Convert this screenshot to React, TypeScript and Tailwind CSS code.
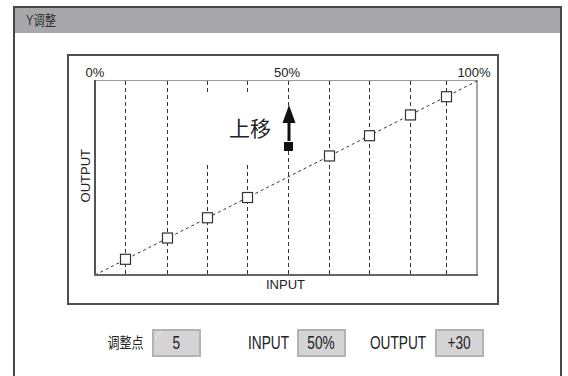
const W = 383;
const H = 195;
const cols = [31, 73, 113, 153, 194, 235, 275, 316, 352];
const yAt = (x: number) => H - (x / W) * (H - 1);

function Chart() {
  return (
    <svg width={385} height={197} className="block">
      {/* frame of the plot */}
      <line x1={0} y1={0.5} x2={384} y2={0.5} stroke="#9a9a9a" strokeWidth={1} />
      <line x1={383} y1={0} x2={383} y2={196} stroke="#8a8a8a" strokeWidth={1.5} />

      {cols.map((x) => (
        <line key={x} x1={x + 0.5} y1={1} x2={x + 0.5} y2={194} stroke="#333" strokeWidth={1} strokeDasharray="4 3" />
      ))}

      <line x1={1} y1={H} x2={W} y2={1} stroke="#333" strokeWidth={1} strokeDasharray="3 3" />

      {/* label area knocks out the guides */}
      <rect x={108} y={15} width={58} height={68} fill="#fff" />
      <text x={135} y={56} fontSize={21} fill="#222" fontFamily="'Noto Sans CJK SC', sans-serif">
        上移
      </text>

      <polygon points="195,25 188.5,43 201.5,43" fill="#111" />
      <rect x={193.5} y={42} width={3} height={19} fill="#111" />
      <rect x={190} y={62} width={9} height={9} fill="#111" />

      {cols
        .filter((x) => x !== 194)
        .map((x) => (
          <rect key={x} x={x - 4.5} y={yAt(x) - 5} width={10} height={10} fill="#fff" stroke="#333" strokeWidth={1.2} />
        ))}

      <line x1={1} y1={0} x2={1} y2={196} stroke="#555" strokeWidth={2} />
      <line x1={0} y1={H} x2={384} y2={H} stroke="#666" strokeWidth={2} />
    </svg>
  );
}

function Narrow({ w, children, size = 'text-[19px]' }: { w: string; children: React.ReactNode; size?: string }) {
  return (
    <div className={`${w} flex justify-center`}>
      <span className={`inline-block whitespace-nowrap scale-x-[0.72] ${size} leading-[22px] text-[#222]`}>{children}</span>
    </div>
  );
}

function ValueBox({ children, mark }: { children: React.ReactNode; mark?: boolean }) {
  return (
    <div className="relative w-[49px] h-[28px] bg-[#d4d4d6] border-2 border-[#b3b3b5] flex items-center justify-center">
      {mark && (
        <svg width={10} height={10} className="absolute left-0 top-0">
          <path d="M0.5 7.5 L7.5 0.5" stroke="#f4f4f4" strokeWidth={1} />
        </svg>
      )}
      <span className="inline-block whitespace-nowrap scale-x-[0.72] text-[19px] leading-[22px] text-[#222]">{children}</span>
    </div>
  );
}

export default function App() {
  return (
    <div className="w-[568px] h-[376px] overflow-hidden bg-white font-['Liberation_Sans','Noto_Sans_CJK_SC',sans-serif]">
      <div className="ml-[13px] mt-[6px] w-[549px] h-[372px] border-2 border-b-0 border-[#464646] flex flex-col">
        <div className="h-[25px] bg-[#a8a8aa] flex items-center pl-[11px]">
          <span className="inline-block origin-left scale-x-[0.8] text-[14px] text-[#333]">Y调整</span>
        </div>

        <div className="ml-[52px] mt-[21px] w-[432px] h-[251px] border-2 border-[#4e4e4e] flex flex-col">
          <div className="relative ml-[25px] mt-[10px] h-[14px] w-[383px] text-[13px] leading-[14px] text-[#222]">
            <span className="absolute left-[1px] -translate-x-1/2">0%</span>
            <span className="absolute left-[193px] -translate-x-1/2">50%</span>
            <span className="absolute left-[380px] -translate-x-1/2">100%</span>
          </div>
          <div className="flex">
            <div className="w-[25px] pl-[9px] pb-[5px] flex items-center justify-center">
              <span className="[writing-mode:vertical-rl] rotate-180 text-[13px] leading-[14px] text-[#222]">OUTPUT</span>
            </div>
            <Chart />
          </div>
          <div className="ml-[25px] mt-[1px] w-[383px] text-center text-[13px] leading-[14px] text-[#222]">INPUT</div>
        </div>

        <div className="ml-[92px] mt-[24px] h-[28px] flex items-center">
          <div className="w-[36px] flex justify-center">
            <span className="inline-block whitespace-nowrap scale-x-[0.8] text-[15px] leading-[20px] text-[#222]">调整点</span>
          </div>
          <div className="ml-[9px]">
            <ValueBox mark>5</ValueBox>
          </div>
          <div className="ml-[47px]">
            <Narrow w="w-[40px]">INPUT</Narrow>
          </div>
          <div className="ml-[9px]">
            <ValueBox>50%</ValueBox>
          </div>
          <div className="ml-[25px]">
            <Narrow w="w-[55px]">OUTPUT</Narrow>
          </div>
          <div className="ml-[9px]">
            <ValueBox>+30</ValueBox>
          </div>
        </div>
      </div>
    </div>
  );
}
